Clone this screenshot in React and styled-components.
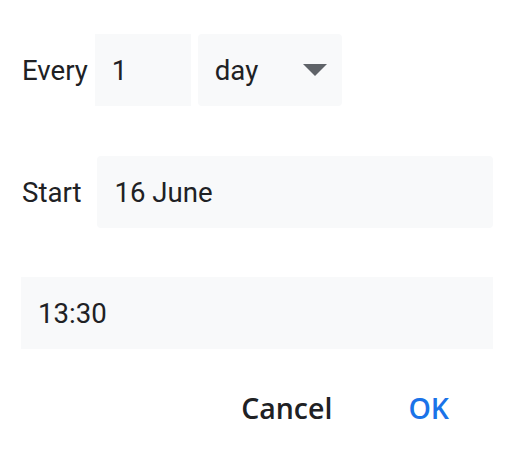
import React from "react";
import styled, { createGlobalStyle } from "styled-components";

const Global = createGlobalStyle`
  html, body { margin: 0; padding: 0; background: #fff; }
  body { font-family: Roboto, "Noto Sans", sans-serif; color: #202124; }
`;

const Dialog = styled.div`
  width: 515px;
  height: 462px;
  box-sizing: border-box;
  padding: 34px 22px 0 21px;
  display: flex;
  flex-direction: column;
`;

const Row = styled.div`
  display: flex;
  align-items: center;
  height: 72px;
  margin-bottom: ${(p) => p.$mb}px;
`;

const Label = styled.span`
  font-size: 27.6px;
  color: #202124;
  margin-left: 1px;
  margin-right: ${(p) => p.$gap}px;
`;

const Field = styled.div`
  height: 72px;
  box-sizing: border-box;
  background: #f8f9fa;
  border-radius: ${(p) => p.$r || 0}px;
  display: flex;
  align-items: center;
  padding-left: 17px;
  padding-right: 16px;
  font-size: 27.6px;
  color: #202124;
  width: ${(p) => (p.$w ? `${p.$w}px` : "auto")};
  flex: ${(p) => (p.$w ? "none" : "1")};
  margin-right: ${(p) => p.$mr || 0}px;
`;

const Select = styled(Field)`
  justify-content: space-between;
  padding-right: 15px;
`;

const Actions = styled.div`
  display: flex;
  justify-content: flex-end;
  align-items: center;
  gap: 76px;
  padding-right: 44px;
  margin-top: 40px;
`;

const Button = styled.button`
  background: none;
  border: none;
  padding: 0;
  font-family: "Open Sans", Roboto, sans-serif;
  font-weight: 550;
  font-size: 28.5px;
  color: ${(p) => (p.$primary ? "#1a73e8" : "#202124")};
  cursor: pointer;
`;

function Caret() {
  return (
    <svg width="24" height="12" viewBox="0 0 24 12">
      <path d="M0 0 H24 L12 12 Z" fill="#5f6368" />
    </svg>
  );
}

export default function App() {
  return (
    <>
      <Global />
      <Dialog>
        <Row $mb={50}>
          <Label $gap={7}>Every</Label>
          <Field $w={96} $mr={7}>1</Field>
          <Select $w={144} $r={4}>
            day
            <Caret />
          </Select>
        </Row>
        <Row $mb={49}>
          <Label $gap={16}>Start</Label>
          <Field $r={4}>16 June</Field>
        </Row>
        <Row>
          <Field>13:30</Field>
        </Row>
        <Actions>
          <Button>Cancel</Button>
          <Button $primary>OK</Button>
        </Actions>
      </Dialog>
    </>
  );
}
